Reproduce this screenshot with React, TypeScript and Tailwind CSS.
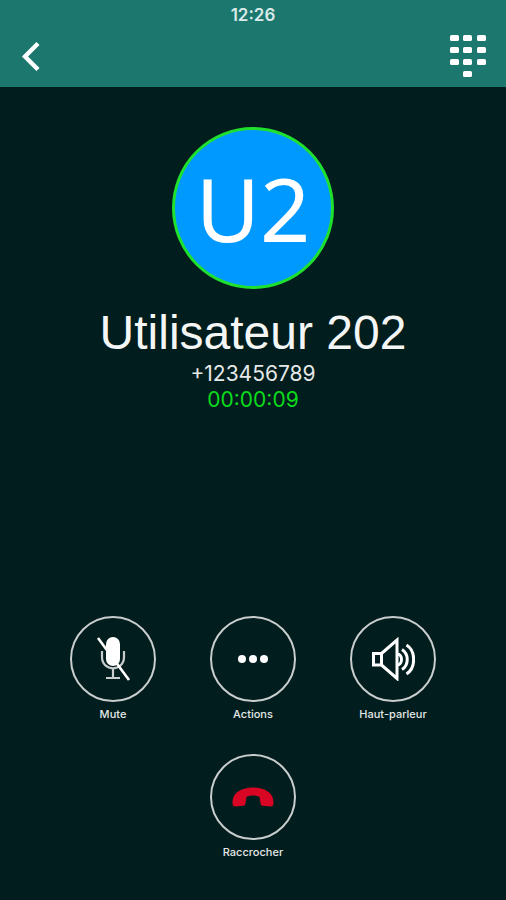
import React from 'react';

const MuteIcon = () => (
  <svg className="w-11 h-11" viewBox="0 0 44 44" fill="none" aria-hidden="true">
    <path d="M11 14 V20 C11 35 33 35 33 20 V14" stroke="#c9cdcd" strokeWidth="2.2" />
    <path d="M22 31 V40 M15 41 H29" stroke="#c9cdcd" strokeWidth="2.2" />
    <path d="M7 1 L38 43" stroke="#fff" strokeWidth="2.6" />
    <rect x="15" y="0" width="14" height="29" rx="7" fill="#fff" />
  </svg>
);

const DotsIcon = () => (
  <svg className="w-8 h-3" viewBox="0 0 32 12" fill="#fff" aria-hidden="true">
    <circle cx="5" cy="6" r="4" />
    <circle cx="16" cy="6" r="4" />
    <circle cx="27" cy="6" r="4" />
  </svg>
);

const SpeakerIcon = () => (
  <svg className="w-11 h-11" viewBox="0 0 44 44" fill="none" stroke="#fff" strokeWidth="3" aria-hidden="true">
    <path d="M2.5 16.5 H10.5 V28 H2.5 Z M10.5 16.5 L26 3 V41.5 L10.5 28" />
    <path d="M26 17 C32 17 32 28 26 28" />
    <path d="M31 12.5 C38 17 38 28 31 32.5" />
    <path d="M35.5 8 C45 14 45 31 35.5 37" />
  </svg>
);

const HangUpIcon = () => (
  <svg className="w-11 h-6" viewBox="0 0 44 24" fill="#d90524" aria-hidden="true">
    <path d="M1.5 18 C1.5 12 4 8.5 8 6 C15 1.3 29 1.3 36 6 C40 8.5 42.5 12 42.5 18 C42.5 20.5 41.5 21.5 39.5 21.5 L32 20.8 C30.3 20.6 29.5 19.8 29.5 18 L28.5 12 C26 10 18 10 15.5 12 L14.5 18 C14.3 19.8 13.7 20.6 12 20.8 L4.5 21.5 C2.5 21.5 1.5 20.5 1.5 18 Z" />
  </svg>
);

const KeypadIcon = () => (
  <svg className="w-10 h-11" viewBox="0 0 40 44" fill="#fff" aria-hidden="true">
    {[1, 13, 25].map((y) =>
      [2, 15, 29].map((x) => <rect key={`${x}-${y}`} x={x} y={y} width="9" height="6" rx="1.6" />)
    )}
    <rect x="15" y="37" width="9" height="6" rx="1.6" />
  </svg>
);

interface CallButtonProps {
  label: string;
  children: React.ReactNode;
}

const CallButton: React.FC<CallButtonProps> = ({ label, children }) => (
  <button type="button" className="group flex w-[86px] flex-col items-center gap-1">
    <span className="flex h-[86px] w-[86px] items-center justify-center rounded-full border-2 border-[#c9cdcd] group-hover:bg-white/10">
      {children}
    </span>
    <span className="whitespace-nowrap text-[11px] leading-4 font-medium text-[#e4e8e8]">{label}</span>
  </button>
);

const App: React.FC = () => {
  return (
    <div className="flex min-h-screen flex-col bg-[#021d1d] font-['Inter',sans-serif] text-white">
      <header className="bg-[#1c776e] pb-2">
        <div className="pt-[5px] text-center text-[17px] leading-5 font-semibold text-[#d9eae8]">12:26</div>
        <div className="flex items-center justify-between pt-2 pr-[18px] pl-5">
          <button type="button" aria-label="Retour" className="py-2">
            <svg className="h-[30px] w-[22px]" viewBox="0 0 22 30" fill="none" aria-hidden="true">
              <path d="M18 2.5 L5 15.5 L18 28.5" stroke="#fff" strokeWidth="4.4" />
            </svg>
          </button>
          <button type="button" aria-label="Clavier">
            <KeypadIcon />
          </button>
        </div>
      </header>

      <main className="flex flex-1 flex-col items-center justify-between pt-10 pb-10">
        <section className="flex flex-col items-center">
          <div className="flex h-[162px] w-[162px] items-center justify-center rounded-full border-3 border-[#1fe02f] bg-[#0099ff] font-['Noto_Sans',sans-serif] text-[88px] leading-none">
            U2
          </div>
          <h1 className="mt-4 font-['Liberation_Sans',sans-serif] text-5xl leading-14 text-[#f4f6f6]">
            Utilisateur 202
          </h1>
          <p className="text-[21px] leading-[26px] text-[#e4e8e8]">+123456789</p>
          <p className="text-[21px] leading-[26px] text-[#0bdb1c]">00:00:09</p>
        </section>

        <section className="flex flex-col items-center gap-8">
          <div className="flex gap-[54px]">
            <CallButton label="Mute">
              <MuteIcon />
            </CallButton>
            <CallButton label="Actions">
              <DotsIcon />
            </CallButton>
            <CallButton label="Haut-parleur">
              <SpeakerIcon />
            </CallButton>
          </div>
          <CallButton label="Raccrocher">
            <HangUpIcon />
          </CallButton>
        </section>
      </main>
    </div>
  );
};

export default App;
